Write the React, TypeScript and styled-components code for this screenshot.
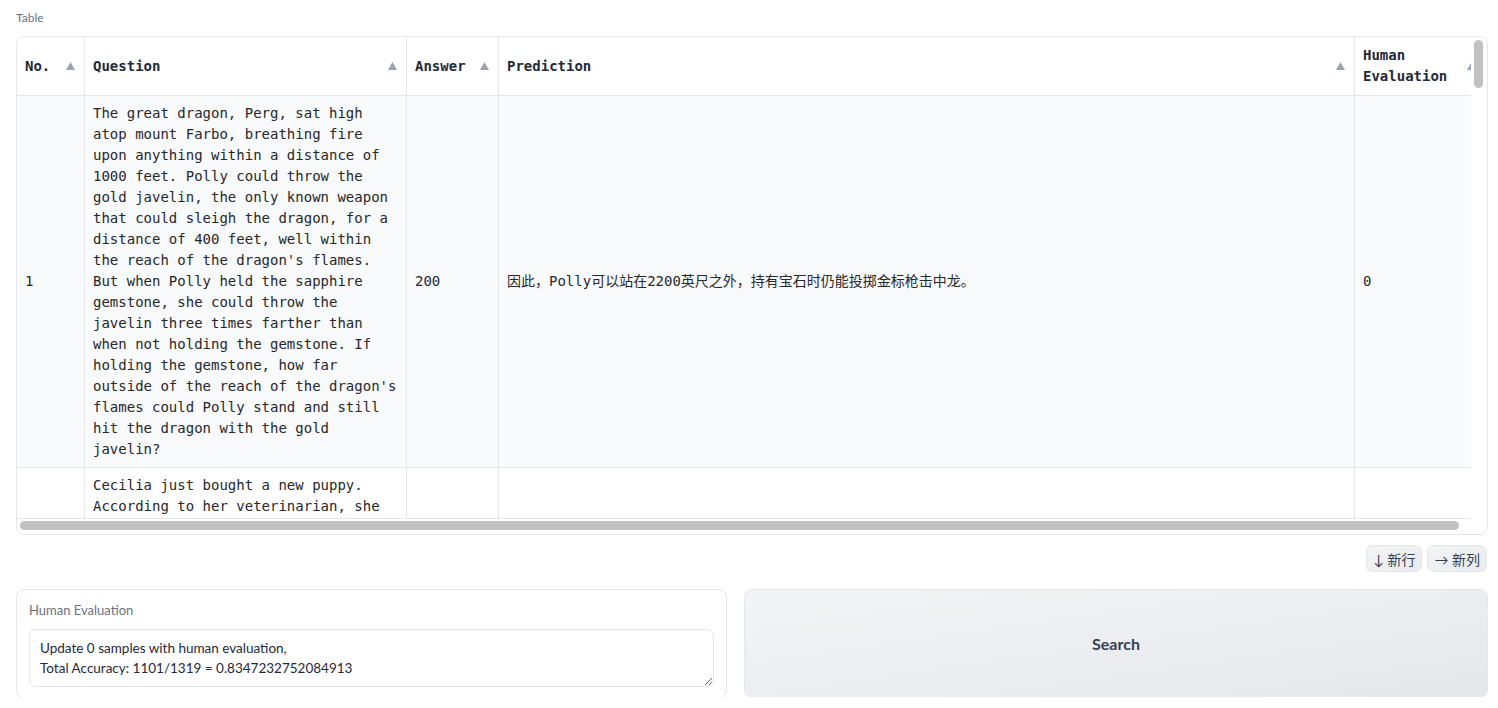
import React from "react";
import styled, { createGlobalStyle } from "styled-components";

const GlobalStyle = createGlobalStyle`
  html, body {
    margin: 0;
    padding: 0;
    background: #ffffff;
  }
  body {
    font-family: Lato, "Noto Sans CJK SC", sans-serif;
    color: #1f2937;
  }
  * {
    box-sizing: border-box;
  }
`;

const Page = styled.div`
  width: 1472px;
  margin-left: 16px;
  padding-top: 10px;
  display: flex;
  flex-direction: column;
`;

const BlockLabel = styled.div`
  font-size: 12px;
  line-height: 16px;
  color: #6b7280;
  margin-bottom: 10px;
`;

const TableFrame = styled.div`
  height: 499px;
  border: 1px solid #e5e7eb;
  border-radius: 8px;
  overflow: hidden;
  background: #ffffff;
  display: grid;
  grid-template-columns: 1fr 16px;
  grid-template-rows: 1fr 15px;
`;

const Viewport = styled.div`
  overflow: hidden;
  min-width: 0;
  min-height: 0;
  border-bottom: 1px solid #e5e7eb;
`;

const VTrack = styled.div`
  background: #ffffff;
  padding: 3px 4px 0 3px;
`;

const HTrack = styled.div`
  background: #ffffff;
  padding: 2px 12px 4px 3px;
`;

const Thumb = styled.div<{ $vertical?: boolean }>`
  background: #c1c1c1;
  border-radius: 5px;
  width: ${(p) => (p.$vertical ? "9px" : "100%")};
  height: ${(p) => (p.$vertical ? "48px" : "9px")};
`;

const Corner = styled.div`
  background: #ffffff;
`;

const Grid = styled.table`
  table-layout: fixed;
  width: 1468px;
  border-collapse: separate;
  border-spacing: 0;
  font-family: "DejaVu Sans Mono", "Noto Sans CJK SC", monospace;
  font-size: 14px;
  line-height: 21px;
  color: #1f2937;
`;

const HeadCell = styled.th`
  background: #ffffff;
  text-align: left;
  font-weight: 700;
  padding: 8px 9px 8px 8px;
  border-right: 1px solid #e5e7eb;
  border-bottom: 1px solid #e5e7eb;
  vertical-align: middle;

  &:last-child {
    border-right: none;
  }
`;

const HeadInner = styled.div`
  display: flex;
  align-items: center;
  justify-content: space-between;
  gap: 6px;
`;

const SortArrow = styled.svg`
  flex: none;
  width: 9px;
  height: 8px;
  fill: #9ca3af;
`;

const Row = styled.tr<{ $odd: boolean }>`
  background: ${(p) => (p.$odd ? "#f9fafb" : "#ffffff")};
`;

const Cell = styled.td`
  padding: 7px 8px;
  border-right: 1px solid #e5e7eb;
  border-bottom: 1px solid #e5e7eb;
  vertical-align: middle;
  white-space: normal;
  word-wrap: break-word;
  font-weight: 400;
  color: #27272a;
`;

const ActionBar = styled.div`
  display: flex;
  justify-content: flex-end;
  gap: 5px;
  margin-top: 10px;
  padding-right: 1px;
`;

const SmallButton = styled.button`
  height: 27px;
  padding: 0 6px;
  border: 1px solid #e5e7eb;
  border-radius: 6px;
  background: linear-gradient(to bottom right, #f3f4f6, #e9ebee);
  font-family: Lato, "Noto Sans CJK SC", sans-serif;
  font-size: 14px;
  color: #374151;
  display: flex;
  align-items: center;
  gap: 4px;
  cursor: pointer;
`;

const BottomRow = styled.div`
  display: grid;
  grid-template-columns: 711px 1fr;
  gap: 17px;
  margin-top: 17px;
  height: 108px;
`;

const Panel = styled.div`
  border: 1px solid #e5e7eb;
  border-radius: 8px;
  padding: 11px 12px 10px;
  display: flex;
  flex-direction: column;
`;

const PanelLabel = styled.label`
  font-size: 13px;
  line-height: 18px;
  color: #6b7280;
  margin-bottom: 10px;
`;

const TextBox = styled.textarea`
  width: 100%;
  height: 58px;
  padding: 8px 10px;
  border: 1px solid #e5e7eb;
  border-radius: 6px;
  box-shadow: inset 0 1px 2px rgba(0, 0, 0, 0.03);
  font-family: Lato, "Noto Sans CJK SC", sans-serif;
  font-size: 13.5px;
  line-height: 20px;
  color: #1f2937;
  resize: vertical;
  outline: none;
  overflow: hidden;
`;

const SearchButton = styled.button`
  border: 1px solid #e5e7eb;
  border-radius: 8px;
  background: linear-gradient(to bottom right, #f3f4f6, #e5e7eb);
  font-family: Lato, sans-serif;
  font-size: 16px;
  font-weight: 700;
  color: #374151;
  cursor: pointer;
`;

const columns = [
  { key: "no", title: "No.", width: 68 },
  { key: "question", title: "Question", width: 322 },
  { key: "answer", title: "Answer", width: 92 },
  { key: "prediction", title: "Prediction", width: 856 },
  { key: "human", title: "Human Evaluation", width: 130 },
];

const rows = [
  {
    no: "1",
    question:
      "The great dragon, Perg, sat high atop mount Farbo, breathing fire upon anything within a distance of 1000 feet. Polly could throw the gold javelin, the only known weapon that could sleigh the dragon, for a distance of 400 feet, well within the reach of the dragon's flames. But when Polly held the sapphire gemstone, she could throw the javelin three times farther than when not holding the gemstone. If holding the gemstone, how far outside of the reach of the dragon's flames could Polly stand and still hit the dragon with the gold javelin?",
    answer: "200",
    prediction: "因此，Polly可以站在2200英尺之外，持有宝石时仍能投掷金标枪击中龙。",
    human: "0",
  },
  {
    no: "2",
    question:
      "Cecilia just bought a new puppy. According to her veterinarian, she has to feed the puppy 1 cup of dog food every day for the first 180 days. Then she has to feed the puppy 2 cups of dog food every day for the rest of its life. If one bag of dog food contains 110 cups, how many bags of dog food will Cecilia use in the first year?",
    answer: "5",
    prediction: "因此，Cecilia在第一年将使用5袋狗粮。",
    human: "0",
  },
];

const Arrow = () => (
  <SortArrow viewBox="0 0 9 8">
    <path d="M4.5 0L9 8H0z" />
  </SortArrow>
);

export default function App() {
  return (
    <>
      <GlobalStyle />
      <Page>
        <BlockLabel>Table</BlockLabel>
        <TableFrame>
          <Viewport>
            <Grid>
              <colgroup>
                {columns.map((c) => (
                  <col key={c.key} style={{ width: c.width }} />
                ))}
              </colgroup>
              <thead>
                <tr>
                  {columns.map((c) => (
                    <HeadCell key={c.key}>
                      <HeadInner>
                        <span>{c.title}</span>
                        <Arrow />
                      </HeadInner>
                    </HeadCell>
                  ))}
                </tr>
              </thead>
              <tbody>
                {rows.map((r, i) => (
                  <Row key={r.no} $odd={i % 2 === 0}>
                    <Cell>{r.no}</Cell>
                    <Cell>{r.question}</Cell>
                    <Cell>{r.answer}</Cell>
                    <Cell>{r.prediction}</Cell>
                    <Cell>{r.human}</Cell>
                  </Row>
                ))}
              </tbody>
            </Grid>
          </Viewport>
          <VTrack>
            <Thumb $vertical />
          </VTrack>
          <HTrack>
            <Thumb />
          </HTrack>
          <Corner />
        </TableFrame>

        <ActionBar>
          <SmallButton>↓ 新行</SmallButton>
          <SmallButton>→ 新列</SmallButton>
        </ActionBar>

        <BottomRow>
          <Panel>
            <PanelLabel>Human Evaluation</PanelLabel>
            <TextBox
              readOnly
              defaultValue={
                "Update 0 samples with human evaluation,\nTotal Accuracy: 1101/1319 = 0.8347232752084913"
              }
            />
          </Panel>
          <SearchButton>Search</SearchButton>
        </BottomRow>
      </Page>
    </>
  );
}
